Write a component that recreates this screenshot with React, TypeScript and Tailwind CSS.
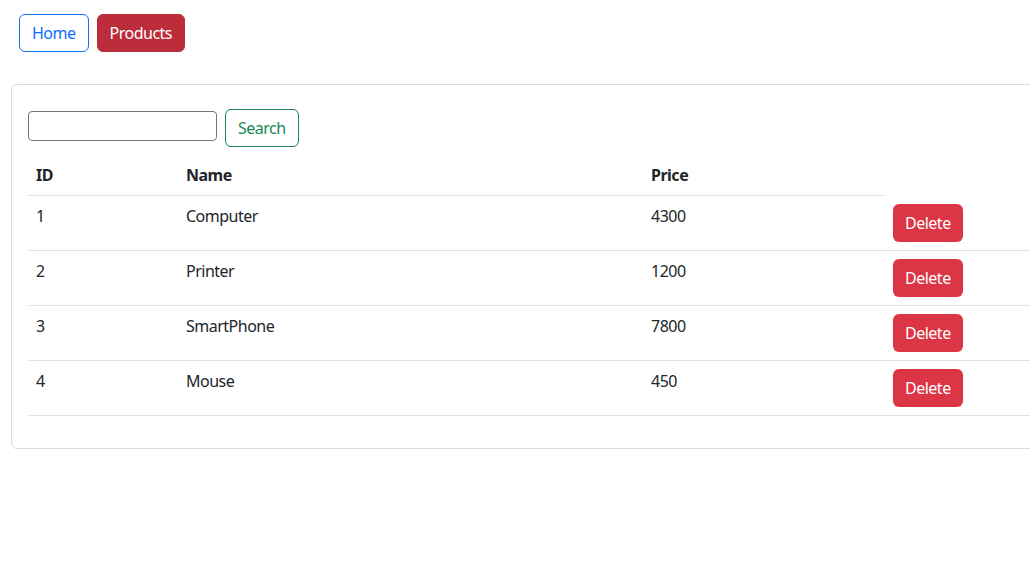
const products = [
  { id: 1, name: "Computer", price: 4300 },
  { id: 2, name: "Printer", price: 1200 },
  { id: 3, name: "SmartPhone", price: 7800 },
  { id: 4, name: "Mouse", price: 450 },
];

export default function App() {
  return (
    <div
      className="w-[1030px] h-[568px] overflow-hidden bg-white text-[#212529] text-base leading-6 tracking-[-0.5px]"
      style={{ fontFamily: '"Noto Sans", "Open Sans", sans-serif' }}
    >
      {/* ナビゲーション */}
      <nav className="flex gap-2 pl-[19px] pt-[14px]">
        <button className="h-[38px] px-3 rounded-md border border-[#0d6efd] text-[#0d6efd]">
          Home
        </button>
        <button className="h-[38px] px-3 rounded-md border border-[#bb2d3b] bg-[#bb2d3b] text-white">
          Products
        </button>
      </nav>

      {/* 商品カード */}
      <div className="ml-[11px] mt-8 w-[1200px] rounded-md border border-[#dcdcdc] p-4">
        <form className="flex items-start gap-2 mt-2 mb-2">
          <input className="mt-[2px] h-[30px] w-[189px] rounded-sm border border-[#767676] px-1" />
          <button
            type="button"
            className="h-[38px] px-3 rounded-md border border-[#198754] text-[#198754]"
          >
            Search
          </button>
        </form>

        <table className="w-full table-fixed border-collapse mb-4">
          <colgroup>
            <col className="w-[150px]" />
            <col className="w-[465px]" />
            <col className="w-[242px]" />
            <col />
          </colgroup>
          <thead>
            <tr>
              <th className="p-2 text-left font-bold border-b border-[#dee2e6]">ID</th>
              <th className="p-2 text-left font-bold border-b border-[#dee2e6]">Name</th>
              <th className="p-2 text-left font-bold border-b border-[#dee2e6]">Price</th>
            </tr>
          </thead>
          <tbody>
            {products.map((p) => (
              <tr key={p.id} className="border-b border-[#dee2e6]">
                <td className="p-2 align-top">{p.id}</td>
                <td className="p-2 align-top">{p.name}</td>
                <td className="p-2 align-top">{p.price}</td>
                <td className="p-2 align-top">
                  <button className="h-[38px] px-3 rounded-md bg-[#dc3545] text-white">
                    Delete
                  </button>
                </td>
              </tr>
            ))}
          </tbody>
        </table>
      </div>
    </div>
  );
}
